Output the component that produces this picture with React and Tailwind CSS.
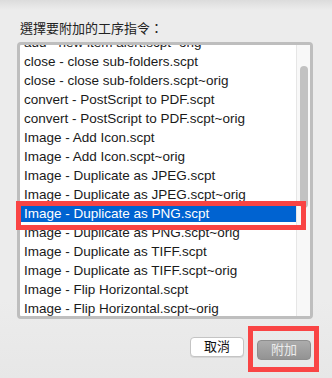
import React from "react";

const scripts = [
  "add - new item alert.scpt~orig",
  "close - close sub-folders.scpt",
  "close - close sub-folders.scpt~orig",
  "convert - PostScript to PDF.scpt",
  "convert - PostScript to PDF.scpt~orig",
  "Image - Add Icon.scpt",
  "Image - Add Icon.scpt~orig",
  "Image - Duplicate as JPEG.scpt",
  "Image - Duplicate as JPEG.scpt~orig",
  "Image - Duplicate as PNG.scpt",
  "Image - Duplicate as PNG.scpt~orig",
  "Image - Duplicate as TIFF.scpt",
  "Image - Duplicate as TIFF.scpt~orig",
  "Image - Flip Horizontal.scpt",
  "Image - Flip Horizontal.scpt~orig",
];

const selected = 9;

const font = { fontFamily: '"Liberation Sans", "Noto Sans CJK TC", sans-serif' };

const App = () => {
  return (
    <div
      className="w-[332px] h-[378px] flex flex-col bg-[linear-gradient(to_bottom,#dcdcdc,#ececec_10px,#ececec_300px,#e7e7e7)] text-[#1a1a1a]"
      style={font}
    >
      <div className="pt-[20px] pl-[20px] text-[13px] leading-[18px] text-[#222]">
        選擇要附加的工序指令：
      </div>

      <div className="relative mt-[4px] ml-[17px] w-[296px] h-[277px] border-[3px] border-[#bebebe] rounded-[4px] bg-white">
        <div className="flex h-full overflow-hidden">
          <div className="flex-1 overflow-hidden">
            <div className="-mt-[13px]">
              {scripts.map((name, i) => (
                <div
                  key={name}
                  className={
                    i === selected
                      ? "h-[19px] pt-px pl-[4px] text-[13.5px] leading-[19px] whitespace-nowrap bg-[#0063d1] text-white"
                      : "h-[19px] pt-px pl-[4px] text-[13.5px] leading-[19px] whitespace-nowrap"
                  }
                >
                  {name}
                </div>
              ))}
            </div>
          </div>
          <div className="w-[14px] h-full border-l border-[#e6e6e6] bg-[#f8f8f8] pt-[21px] pl-[3px]">
            <div className="w-[8px] h-[142px] rounded-full bg-[#c2c2c2]" />
          </div>
        </div>
        <div className="absolute left-[-4px] top-[156px] w-[290px] h-[29px] border-[5px] border-[#f94444] pointer-events-none" />
      </div>

      <div className="flex justify-end gap-[13px] pr-[21px] mt-[18px]">
        <button className="w-[54px] h-[20px] rounded-[4px] bg-white border border-[#c4c4c4] shadow-[0_1px_0_#d6d6d6] text-[13px] leading-[18px] text-[#111]">
          取消
        </button>
        <div className="relative">
          <button className="w-[54px] h-[20px] rounded-[4px] border border-[#8e8e8e] bg-[linear-gradient(to_bottom,#acacac,#939393)] text-[13px] leading-[18px] text-[#ececec]">
            附加
          </button>
          <div className="absolute left-[-9px] top-[-11px] right-[-8px] bottom-[-11px] border-[5px] border-[#f94444] pointer-events-none" />
        </div>
      </div>
    </div>
  );
};

export default App;
